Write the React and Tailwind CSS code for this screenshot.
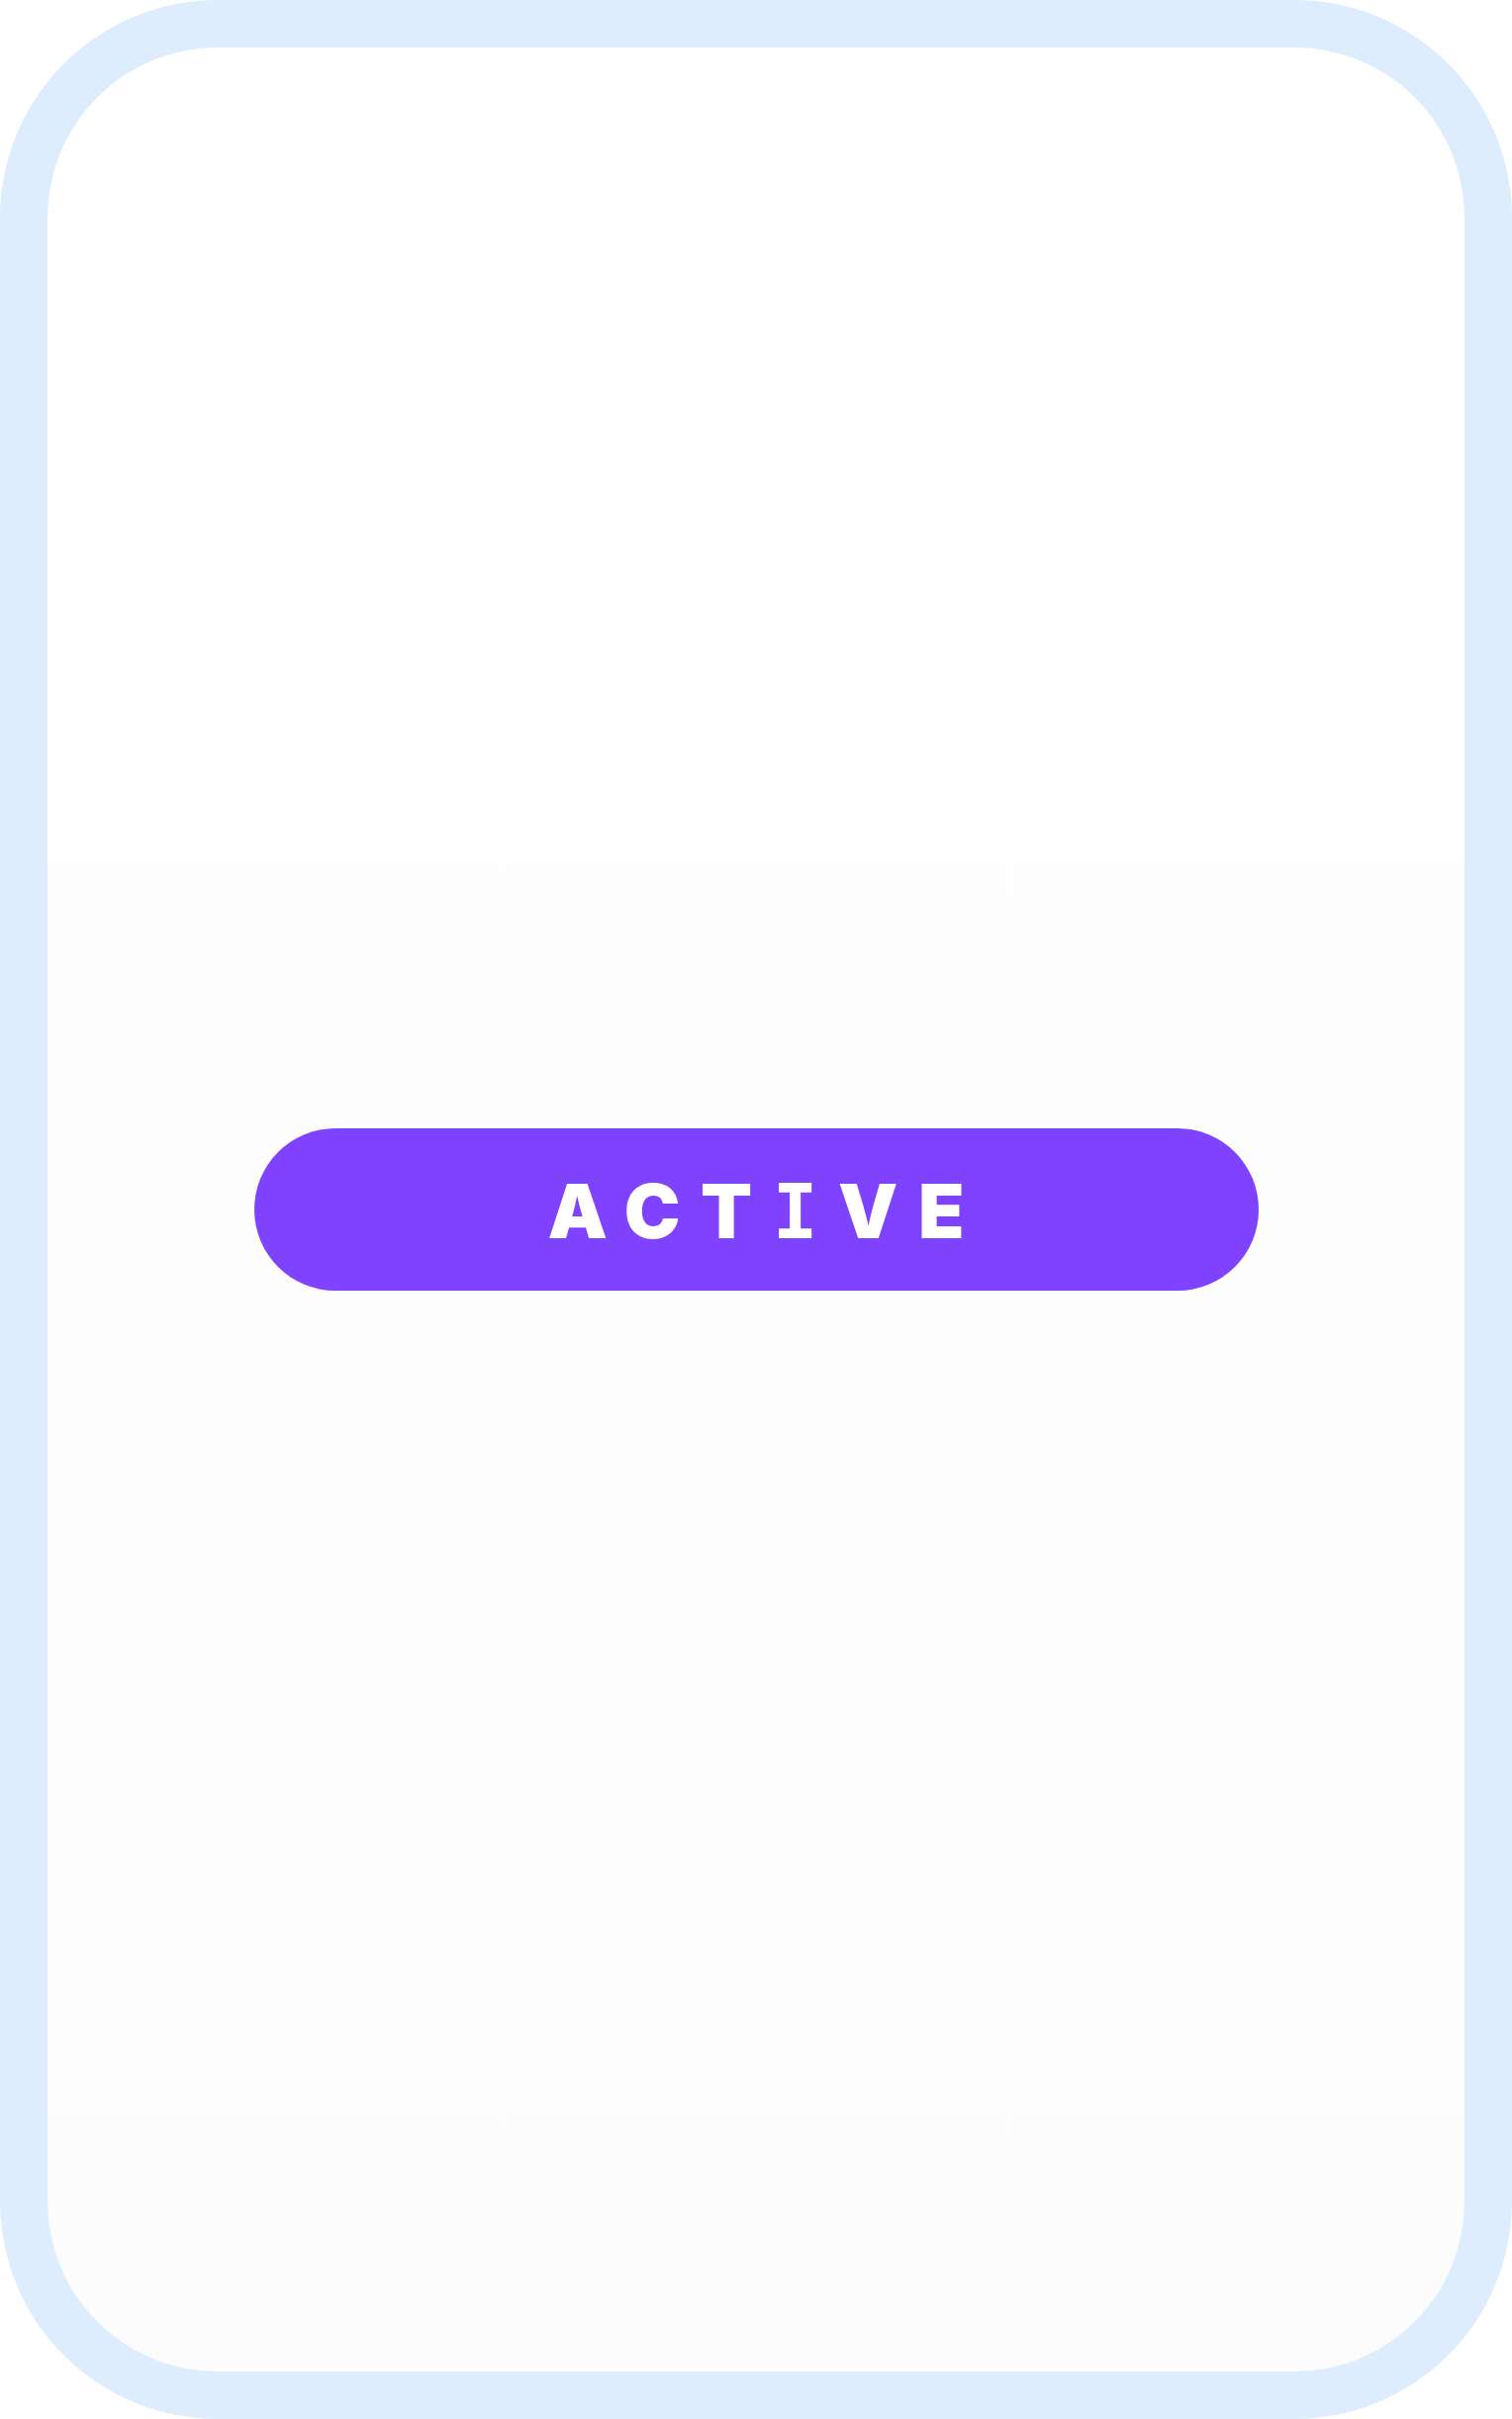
export default function App() {
  return (
    <div className="w-[1528px] h-[2444px] bg-white">
      <div className="w-full h-full rounded-[220px] border-[48px] border-[#ddedfe] bg-linear-to-b from-white to-[#fcfcfc] flex items-center justify-center">
        <button
          type="button"
          className="w-[1015px] h-[164px] rounded-full bg-[#7f42ff] flex items-center justify-center text-white"
        >
          <span
            className="font-black text-[76px] leading-none tracking-[0.27em] mr-[-0.27em] pt-[4px]"
            style={{ fontFamily: 'Inter, "Liberation Sans", sans-serif' }}
          >
            ACT
            <span style={{ fontFamily: '"DejaVu Sans Mono", monospace' }} className="font-bold">
              I
            </span>
            VE
          </span>
        </button>
      </div>
    </div>
  );
}
